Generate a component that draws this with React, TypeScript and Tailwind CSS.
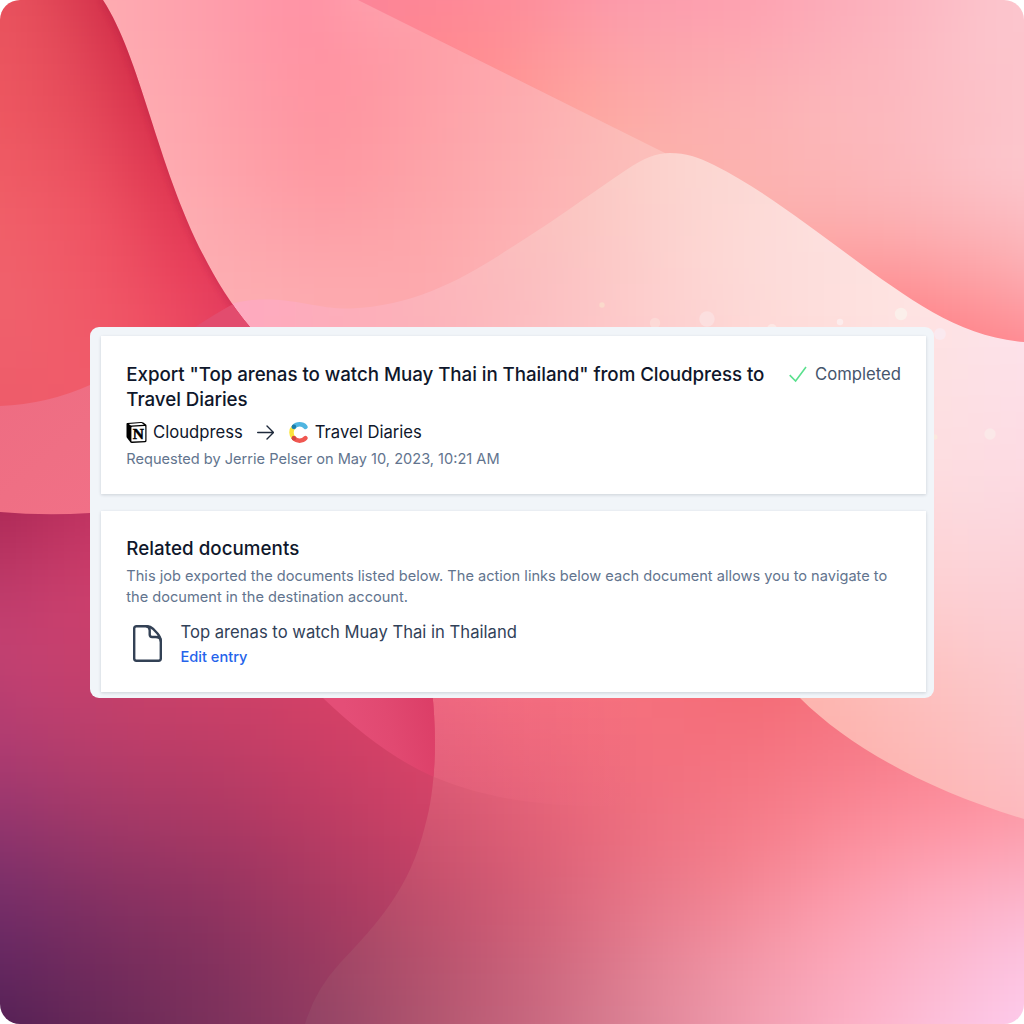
import React from "react";

type Spot = [number, number, string];
type Box = [number, number, number, number];

const upperRight: Spot[] = [
  [380, 0, "#fc8598"], [440, 30, "#ff8791"], [500, 60, "#ff9094"], [530, 0, "#fd8f9c"],
  [620, 0, "#fc9bab"], [590, 90, "#fea4a0"], [650, 140, "#fcafaa"], [750, 10, "#fda3b1"],
  [730, 110, "#fcb0b1"], [860, 10, "#fcb0bc"], [850, 110, "#fcb8bc"], [1000, 30, "#fcc4cc"],
  [1000, 180, "#fcc2c8"], [910, 170, "#fcb9be"], [780, 190, "#fcb4b2"], [1030, 250, "#fcb5ba"],
  [930, 225, "#fcb4b7"], [840, 205, "#fcb3b4"], [830, 265, "#fda09f"], [900, 300, "#ff8b90"],
  [980, 340, "#ff868d"], [980, 285, "#fda0a2"],
];
const upperMiddle: Spot[] = [
  [130, 30, "#fea9b0"], [200, 10, "#fe9fac"], [290, 40, "#ff94a5"], [340, 90, "#ff929f"],
  [170, 160, "#feaab0"], [240, 140, "#fe9fa8"], [320, 170, "#fe959f"], [430, 80, "#fea0a8"],
  [420, 180, "#fda2a7"], [220, 260, "#fdabb0"], [320, 270, "#fda6ac"], [420, 270, "#fda8ac"],
  [510, 150, "#fdacaf"], [520, 220, "#fdb1b3"], [610, 170, "#fcbbb8"],
];
const lightWave: Spot[] = [
  [250, 320, "#feaabf"], [340, 325, "#fdadb9"], [440, 310, "#fcb4ba"], [530, 290, "#fbbdbf"],
  [580, 220, "#fbc6c2"], [670, 170, "#fcd3ce"], [620, 320, "#fdcaca"], [710, 270, "#fdd7d4"],
  [790, 260, "#fddddb"], [800, 340, "#fedcda"], [900, 320, "#fee3e1"], [1000, 360, "#fde1e8"],
  [950, 430, "#fddfe2"], [1020, 440, "#fddce4"], [980, 510, "#fcdae0"], [950, 600, "#fdcfd2"],
  [1020, 620, "#fcccd2"], [840, 700, "#fdb7b2"], [940, 710, "#fdbfbd"], [1010, 710, "#fbc5c8"],
  [920, 790, "#fdb6b4"], [1010, 800, "#fdbabe"],
];
const redWave: Spot[] = [
  [10, 20, "#e8515d"], [60, 30, "#e54d5b"], [115, 20, "#d32f4a"], [10, 120, "#ed5660"],
  [85, 110, "#e64c5b"], [145, 110, "#d9324d"], [10, 220, "#f05e68"], [90, 200, "#ef5463"],
  [180, 200, "#e03752"], [20, 310, "#f0606c"], [110, 280, "#f05565"], [190, 270, "#e93f5b"],
  [90, 360, "#f15c6a"], [165, 320, "#ef4d62"], [240, 320, "#e23b5e"], [10, 390, "#ee5c6a"],
];
const darkWave: Spot[] = [
  [0, 515, "#ae2a57"], [80, 515, "#bd3260"], [0, 560, "#b93462"], [90, 550, "#c93a68"],
  [0, 620, "#c54273"], [90, 600, "#cd406d"],
  [30, 680, "#c44170"], [150, 710, "#c54069"], [250, 700, "#cb4067"], [350, 720, "#d44066"],
  [0, 770, "#a93a70"], [100, 780, "#b03c69"], [200, 800, "#b03a64"], [300, 790, "#c13c64"],
  [420, 820, "#cc4166"], [0, 850, "#87336b"], [110, 870, "#903465"], [230, 870, "#9c3562"],
  [340, 870, "#b03a61"], [420, 890, "#bc4265"], [0, 930, "#6c2a66"], [100, 940, "#762c5e"],
  [210, 950, "#82305d"], [320, 960, "#983a60"], [10, 1020, "#582256"], [120, 1020, "#6c2a58"],
  [230, 1020, "#7e325c"], [310, 1020, "#913b61"],
];
const lowerRight: Spot[] = [
  [430, 700, "#e8627c"], [520, 700, "#f26b7d"], [620, 700, "#f5707d"], [760, 700, "#f46d78"],
  [460, 790, "#dc5b75"], [550, 790, "#e96479"], [650, 780, "#f26f7e"], [770, 780, "#f57784"],
  [870, 760, "#f77d8b"], [430, 870, "#c94f6c"], [520, 870, "#d75b73"], [620, 870, "#e76e80"],
  [740, 870, "#f4808d"], [840, 830, "#fb8b98"], [940, 820, "#fe92a0"], [1020, 850, "#fca4b4"],
  [370, 950, "#a84a68"], [450, 950, "#bb526e"], [540, 960, "#cd647b"], [640, 960, "#e28093"],
  [730, 960, "#f296a6"], [830, 930, "#fca2b3"], [930, 910, "#fdafc3"], [1020, 930, "#fcbfd9"],
  [330, 1020, "#964566"], [430, 1020, "#b2566f"], [530, 1020, "#c8677f"], [640, 1020, "#dd8496"],
  [740, 1020, "#f09aac"], [850, 1020, "#fcb0c5"], [950, 1010, "#fcbfd9"], [1020, 1010, "#fdc8e8"],
];

const dots: [number, number, number, string][] = [
  [602, 305, 2.7, "#fbd9cb"], [655, 323, 5.2, "#fcd9d6"], [707, 319, 7.7, "#fcdfdf"],
  [772, 329, 5, "#fde8e5"], [840, 322, 3.2, "#fdecec"], [901, 314, 6.2, "#fbefea"],
  [940, 334, 5.9, "#fae9ef"], [935, 437, 2.5, "#fbe8dd"], [990, 434, 5.7, "#fbe8e8"],
];

const CELL = 16;

/** Colour at (x, y): a locally linear fit through the spots near the point. */
function colourAt(x: number, y: number, spots: Spot[], reach: number) {
  const near = spots.map(([sx, sy, hex]) => {
    const dx = (sx - x) / reach;
    const dy = (sy - y) / reach;
    return { dx, dy, w: Math.exp(-(dx * dx + dy * dy) / 2) + 1e-5, n: parseInt(hex.slice(1), 16) };
  });
  let s = 0, sx = 0, sy = 0, sxx = 0, sxy = 0, syy = 0;
  for (const { dx, dy, w } of near) {
    s += w;
    sx += w * dx;
    sy += w * dy;
    sxx += w * dx * dx;
    sxy += w * dx * dy;
    syy += w * dy * dy;
  }
  sxx += 0.08 * s;
  syy += 0.08 * s;
  const a = sxx * syy - sxy * sxy;
  const b = sxy * sy - sx * syy;
  const c = sx * sxy - sxx * sy;
  const det = s * a + sx * b + sy * c;
  const rgb = [16, 8, 0].map((shift) => {
    const sum = near.reduce((acc, p) => acc + p.w * (a + b * p.dx + c * p.dy) * ((p.n >> shift) & 255), 0);
    return Math.max(0, Math.min(255, Math.round(sum / det)));
  });
  return `rgb(${rgb.join(",")})`;
}

function Mesh({ box: [x0, y0, x1, y1], spots, reach = 52 }: { box: Box; spots: Spot[]; reach?: number }) {
  const cells: React.ReactElement[] = [];
  for (let y = y0 - 32; y < y1 + 32; y += CELL) {
    for (let x = x0 - 32; x < x1 + 32; x += CELL) {
      cells.push(
        <rect key={`${x}-${y}`} x={x} y={y} width={CELL + 1} height={CELL + 1} fill={colourAt(x + CELL / 2, y + CELL / 2, spots, reach)} />,
      );
    }
  }
  return <g filter="url(#soft)">{cells}</g>;
}

function Backdrop() {
  return (
    <svg className="absolute inset-0 h-full w-full" viewBox="0 0 1024 1024" aria-hidden="true">
      <defs>
        <filter id="soft" filterUnits="userSpaceOnUse" x="-60" y="-60" width="1144" height="1144" colorInterpolationFilters="sRGB">
          <feGaussianBlur stdDeviation="9" />
        </filter>
        <filter id="edge" filterUnits="userSpaceOnUse" x="-50" y="-50" width="1124" height="1124">
          <feGaussianBlur stdDeviation="3" />
        </filter>
        <clipPath id="top"><path d="M340 0H1024V400H340Z" /></clipPath>
        <clipPath id="middle"><path d="M100 0H358L665 153L700 340H200Z" /></clipPath>
        <clipPath id="light">
          <path d="M215 310C240 299 255 299 280 300C310 303 325 309 350 308.500C415 306 465 278 512 247C560 217 590 194 626 170C644 158 656 153 670 153C686 153 698 157 714 165C760 188 806 224 850 256C910 300 960 337 1024 342V819C930 791 850 748 800 698L760 640L210 600Z" />
        </clipPath>
        <clipPath id="red"><path d="M0 0H103C151 74 163 223 250 327L300 420H0Z" /></clipPath>
        <clipPath id="dark">
          <path d="M0 512Q45 516 90 513L300 560L432 690C437 735 436 788 425 826C410 888 378 923 340 963Q315 990 305 1024H0Z" />
        </clipPath>
        <linearGradient id="rose" x1="0" y1="380" x2="120" y2="520" gradientUnits="userSpaceOnUse">
          <stop stopColor="#ee6c82" /><stop offset="0.5" stopColor="#ef6f84" /><stop offset="1" stopColor="#f27088" />
        </linearGradient>
        <linearGradient id="petal" x1="350" y1="730" x2="434" y2="710" gradientUnits="userSpaceOnUse">
          <stop stopColor="#e44e77" /><stop offset="0.45" stopColor="#e14971" /><stop offset="1" stopColor="#dc3e67" />
        </linearGradient>
        <linearGradient id="glow" x1="440" y1="0" x2="640" y2="0" gradientUnits="userSpaceOnUse">
          <stop stopColor="#ff7590" stopOpacity="0.2" /><stop offset="1" stopColor="#ff7590" stopOpacity="0" />
        </linearGradient>
      </defs>
      <Mesh box={[300, 670, 1024, 1024]} spots={lowerRight} />
      <path d="M323 698C360 733 395 760 434 777C485 798 540 807 610 806L690 800V690H323Z" fill="url(#glow)" />
      <g clipPath="url(#top)"><Mesh box={[340, 0, 1024, 360]} spots={upperRight} reach={44} /></g>
      <g clipPath="url(#middle)"><Mesh box={[90, 0, 700, 340]} spots={upperMiddle} /></g>
      <g clipPath="url(#light)"><Mesh box={[200, 140, 1024, 830]} spots={lightWave} /></g>
      {dots.map(([x, y, r, color]) => <circle key={x} cx={x} cy={y} r={r} fill={color} />)}
      <g clipPath="url(#red)">
        <Mesh box={[0, 0, 270, 420]} spots={redWave} reach={44} />
        <path d="M103 0C151 74 163 223 250 327" fill="none" stroke="#a91f43" strokeWidth="4" opacity="0.4" filter="url(#edge)" />
        <path d="M195 327Q215 314 233 304L330 420H195Z" fill="#e24c6e" />
      </g>
      <path d="M0 406Q48 404 90 385L150 450V560H0Z" fill="url(#rose)" />
      <g clipPath="url(#dark)">
        <Mesh box={[0, 500, 450, 1024]} spots={darkWave} />
        <path d="M323 698C360 733 395 760 434 777L450 690Z" fill="url(#petal)" />
      </g>
    </svg>
  );
}

function NotionMark() {
  return (
    <svg className="mr-[6px] h-[21px] w-[21px]" viewBox="0 0 21 21">
      <path d="M1.200 .9L15.200 0C16.200 0 16.700 .2 17.300 .6L20 2.600C20.400 2.900 20.500 3.200 20.500 3.800V18.700C20.500 19.600 20.100 20.100 19.200 20.200L6.200 21C5.300 21 4.900 20.800 4.400 20.200L1.100 16.100C.7 15.500 .5 15.100 .5 14.500V1.900C.5 1.300 .7 1 1.200 .9Z" fill="#000" />
      <path d="M2.700 1.900L14.700 1.100C15.500 1.100 15.800 1.200 16.300 1.500L18 2.700L5.700 3.500C5 3.500 4.700 3.400 4.200 3L2.700 1.900Z" fill="#fff" />
      <path d="M6.100 4.800L18.700 4C19.100 4 19.300 4.200 19.300 4.600V18.200C19.300 18.700 19.100 18.900 18.700 18.900L6.300 19.600C5.700 19.600 5.400 19.400 5.400 18.900V5.500C5.400 5.100 5.600 4.900 6.100 4.800Z" fill="#fff" />
      <text x="12.300" y="17.200" textAnchor="middle" fontFamily="Liberation Serif, serif" fontWeight="700" fontSize="15.500" stroke="#000" strokeWidth=".5">N</text>
    </svg>
  );
}

function ContentfulMark() {
  return (
    <svg className="h-[21px] w-[20px]" viewBox="0 0 20 21" fill="none" strokeWidth="4.500" strokeLinecap="round">
      <path d="M4.800 16.100A7.900 7.900 0 0 1 4.800 4.900" stroke="#fbe43c" />
      <path d="M4.800 4.900A7.900 7.900 0 0 1 16.500 4.900" stroke="#4fb5e1" />
      <path d="M4.800 16.100A7.900 7.900 0 0 0 16.500 16.100" stroke="#f05751" />
      <circle cx="4.900" cy="4.800" r="2.250" fill="#1a7cab" stroke="none" />
      <circle cx="4.900" cy="16.200" r="2.250" fill="#d34840" stroke="none" />
    </svg>
  );
}

function JobCard() {
  return (
    <section className="h-[158px] bg-white px-[25px] pt-[26px] shadow-[0_1px_3px_rgba(15,23,42,0.16)]">
      <div className="flex items-start justify-between">
        <h1 className="w-[650px] pl-[0.3px] text-[18.75px] font-medium leading-[25px] tracking-[-0.055px] text-slate-900">
          Export "Top arenas to watch Muay Thai in Thailand" from Cloudpress to Travel Diaries
        </h1>
        <div className="flex items-center gap-[8px] whitespace-nowrap text-[16.67px] leading-[25px] text-slate-600">
          <svg className="h-[17px] w-[18px]" viewBox="0 0 18 17" fill="none" stroke="#5be08e" strokeWidth="1.600">
            <path d="M.7 9.100L6.600 15L17 1" />
          </svg>
          Completed
        </div>
      </div>
      <div className="mt-[8px] flex h-[25px] items-center text-[16.67px] leading-[25px] text-slate-900">
        <NotionMark />
        <span>Cloudpress</span>
        <svg className="ml-[14px] mr-[15px] h-[16px] w-[17px]" viewBox="0 0 17 16" fill="none" stroke="#1e293b" strokeWidth="1.400" strokeLinecap="round" strokeLinejoin="round">
          <path d="M.7 7.500H16.300M10 1L16.500 7.500L10 14" />
        </svg>
        <ContentfulMark />
        <span className="ml-[6px]">Travel Diaries</span>
      </div>
      <p className="mt-[4px] pl-[0.3px] text-[14.58px] leading-[21px] text-slate-500">Requested by Jerrie Pelser on May 10, 2023, 10:21 AM</p>
    </section>
  );
}

function DocumentsCard() {
  return (
    <section className="h-[181px] bg-white px-[25px] pt-[25px] shadow-[0_1px_3px_rgba(15,23,42,0.16)]">
      <h2 className="pl-[0.3px] text-[18.75px] font-medium leading-[25px] tracking-[0.04px] text-slate-900">Related documents</h2>
      <p className="mt-[5px] pl-[0.3px] text-[14.6px] leading-[21px] text-slate-500">
        This job exported the documents listed below. The action links below each document allows you to navigate to the document in the destination account.
      </p>
      <div className="mt-[12px] flex">
        <svg className="ml-[7px] mt-[5px] h-[37px] w-[29px] shrink-0" viewBox="0 0 29 37" fill="none" stroke="#334155" strokeWidth="2.400" strokeLinecap="round" strokeLinejoin="round">
          <path d="M13.500 1.200H3.400C2.100 1.200 1.200 2.100 1.200 3.400V33.600C1.200 34.900 2.100 35.800 3.400 35.800H25.600C26.900 35.800 27.800 34.900 27.800 33.600V16C27.800 13.500 26.300 10.800 24.500 8.500L20.500 4.200C18.500 2.200 16.300 1.200 13.500 1.200Z" />
          <path d="M13.500 1.200C15.800 1.500 16.700 3.200 16.700 5.400V9.500C16.700 10.900 17.700 12 19.100 12H22.500C25.600 12 27.800 13.200 27.800 16" />
        </svg>
        <div className="ml-[18.500px]">
          <p className="text-[16.64px] leading-[25px] text-slate-700">Top arenas to watch Muay Thai in Thailand</p>
          <a className="mt-[2px] block text-[14.6px] font-medium leading-[21px] text-[#2563eb]" href="#">Edit entry</a>
        </div>
      </div>
    </section>
  );
}

export default function App() {
  return (
    <div className="h-[1024px] w-[1024px] bg-white font-['Inter',sans-serif]">
      <div className="relative flex h-full w-full items-start justify-center overflow-hidden rounded-[20px] pt-[327px]">
        <Backdrop />
        <main className="relative flex h-[371px] w-[844px] flex-col gap-[17px] overflow-hidden rounded-[9px] bg-slate-100 pl-[11px] pr-[8px] pt-[9px]">
          <JobCard />
          <DocumentsCard />
        </main>
      </div>
    </div>
  );
}
